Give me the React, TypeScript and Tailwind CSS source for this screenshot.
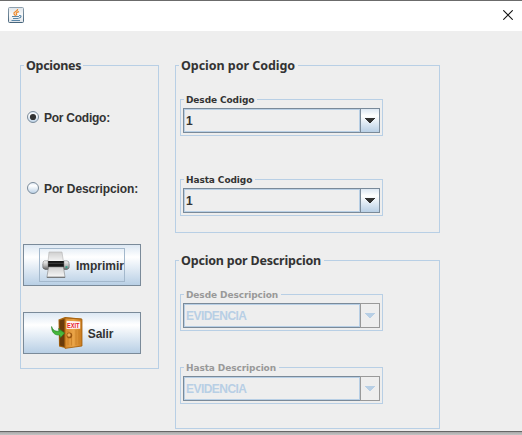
import type { ReactNode } from "react";

function JavaIcon() {
  return (
    <svg width="16" height="16" viewBox="0 0 16 16">
      <defs>
        <linearGradient id="java" x1="0" y1="0" x2="0" y2="1">
          <stop offset="0" stopColor="#dfe5ea" />
          <stop offset="0.5" stopColor="#fafafa" />
          <stop offset="1" stopColor="#dfe3e8" />
        </linearGradient>
        <linearGradient id="javaEdge" x1="0" y1="0" x2="0" y2="1">
          <stop offset="0" stopColor="#8ea0ae" />
          <stop offset="1" stopColor="#46657c" />
        </linearGradient>
      </defs>
      <rect x="0.5" y="0.5" width="15" height="15" rx="1" fill="url(#java)" stroke="url(#javaEdge)" />
      <path d="M9.6 2 C10.2 4.4 5 4.6 6 6.8 L7.6 8.8 M11 4.6 C8 5.4 7.6 6.3 9 8.3" fill="none" stroke="#ee8a2c" strokeWidth="1.3" />
      <path d="M4 9.5 H11 M5 11.5 H10.5 M11 8.5 C14 8 13.5 10.8 10.8 11 M3.5 13.5 H12" fill="none" stroke="#5a87a8" strokeWidth="1.1" />
    </svg>
  );
}

function PrinterIcon() {
  return (
    <svg width="28" height="28" viewBox="0 0 28 28">
      <defs>
        <linearGradient id="body" x1="0" y1="0" x2="0" y2="1">
          <stop offset="0" stopColor="#f5f5f5" />
          <stop offset="0.55" stopColor="#bcbcbc" />
          <stop offset="1" stopColor="#6c6c6c" />
        </linearGradient>
        <linearGradient id="paper" x1="0" y1="0" x2="0" y2="1">
          <stop offset="0" stopColor="#cfcfcf" />
          <stop offset="1" stopColor="#f7f7f7" />
        </linearGradient>
      </defs>
      <path d="M7 1 H20 L21.5 11 H6 Z" fill="url(#paper)" stroke="#b4b4b4" strokeWidth="0.6" />
      <path d="M2 10 H26 L27.2 13 V17 L25 18.5 H3 L0.8 17 V13 Z" fill="#141414" />
      <path d="M1 11 L2.3 9.8 H6 V18 H2.5 L1 16.8 Z" fill="url(#body)" stroke="#777" strokeWidth="0.5" />
      <path d="M22 9.8 H25.5 L27 11.5 V16.8 L25.6 18.2 H22 Z" fill="url(#body)" stroke="#777" strokeWidth="0.5" />
      <path d="M6 12.3 H22" stroke="#555" strokeWidth="0.7" />
      <path d="M6.5 16 H21.5 L23 26 H5 Z" fill="url(#paper)" stroke="#858585" strokeWidth="0.6" />
      <path d="M4.8 26.4 H23.2" stroke="#666" strokeWidth="0.9" />
      <rect x="23.6" y="15.2" width="1.8" height="2" fill="#2fa58d" />
    </svg>
  );
}

function ExitIcon() {
  return (
    <svg width="32" height="32" viewBox="0 0 32 32">
      <defs>
        <linearGradient id="door" x1="0" y1="0" x2="1" y2="0">
          <stop offset="0" stopColor="#d88a2c" />
          <stop offset="0.5" stopColor="#e9a448" />
          <stop offset="1" stopColor="#c97a1d" />
        </linearGradient>
        <linearGradient id="arrow" x1="0" y1="0" x2="0" y2="1">
          <stop offset="0" stopColor="#2f9a2c" />
          <stop offset="1" stopColor="#56ca45" />
        </linearGradient>
      </defs>
      <path d="M7.5 2.5 L14 0 L30.5 1.4 V29 L14 31 L8 29.5 Z" fill="#a8650f" />
      <path d="M8.5 3.5 L13.5 2 V30 L8.8 28.6 Z" fill="#6a3b0b" />
      <path d="M14 0.9 L31 2.2 V29 L14 31.4 Z" fill="url(#door)" stroke="#a3600f" strokeWidth="0.8" />
      <path d="M17 14 V28 M20.5 20 V28.5 M25 13 V28 M28 13 V27" stroke="#c67b24" strokeWidth="0.7" />
      <path d="M15.5 3.8 L29.2 4.4 V11.8 L15.5 12 Z" fill="#fff4f1" />
      <text x="16" y="10.9" fontFamily="Liberation Sans" fontWeight="700" fontSize="7" fill="#e8182a" textLength="12.5" lengthAdjust="spacingAndGlyphs">EXIT</text>
      <circle cx="18.4" cy="18.4" r="2.8" fill="#9c5710" />
      <circle cx="18" cy="18" r="1.7" fill="#efb35e" />
      <path d="M0.6 9.5 C1.8 13.4 4.5 14.5 8.2 14.2 L7.5 11.5 L13.6 16 L9.5 20.5 L8.8 18 C3.4 18.6 0.4 15 0.6 9.5 Z" fill="url(#arrow)" stroke="#26842a" strokeWidth="0.6" />
    </svg>
  );
}

function Group({ title, titleClass, className, children }: { title: string; titleClass: string; className: string; children: ReactNode }) {
  return (
    <section className={"relative border border-[#b8cfe5] " + className}>
      <h2 className={"absolute left-[3px] whitespace-nowrap bg-[#eeeeee] pl-[2px] font-bold " + titleClass}>
        {title}
      </h2>
      {children}
    </section>
  );
}

const panelTitle = "-top-[9px] h-[18px] font-['Noto_Sans',sans-serif] text-[12.5px] leading-[18px] ";

function Combo({ title, titleClass, value, disabled = false }: { title: string; titleClass: string; value: string; disabled?: boolean }) {
  return (
    <Group
      title={title}
      titleClass={"-top-[7px] h-[14px] font-['DejaVu_Sans',sans-serif] text-[9px] leading-[14px] tracking-[-0.1px] " + (disabled ? "text-[#999999] " : "text-[#333333] ") + titleClass}
      className="h-[37px] w-[203px] pl-[2px] pt-[8px]"
    >
      <div className="flex h-[25px] w-[197px]">
        <div className="h-full w-[177px] border border-r-0 border-[#7a8a99]">
          <div className={"h-full border border-[#b8cfe5] pl-px text-[12px] font-bold leading-[22px] " + (disabled ? "tracking-[-0.55px] text-[#b8cfe5]" : "text-[#333333]")}>
            {value}
          </div>
        </div>
        <div className={"flex h-full w-[20px] justify-center border pt-[9px] " + (disabled ? "border-[#999999]" : "border-[#7a8a99] bg-linear-to-b from-[#dde8f3] via-white via-30% to-[#b8cfe5]")}>
          <svg width="10" height="5" viewBox="0 0 10 5" shapeRendering="crispEdges">
            <path d="M0 0 H10 V1 H9 V2 H8 V3 H7 V4 H6 V5 H4 V4 H3 V3 H2 V2 H1 V1 H0 Z" fill={disabled ? "#b8cfe5" : "#333333"} />
          </svg>
        </div>
      </div>
    </Group>
  );
}

function Radio({ label, checked = false, spacing }: { label: string; checked?: boolean; spacing: string }) {
  return (
    <div className="ml-[6px] flex h-[12px] items-center gap-[5px]">
      <svg width="12" height="12" viewBox="0 0 12 12">
        <defs>
          <linearGradient id="radio" x1="0" y1="0" x2="0" y2="1">
            <stop offset="0" stopColor="#dde8f3" />
            <stop offset="0.3" stopColor="#ffffff" />
            <stop offset="1" stopColor="#b8cfe5" />
          </linearGradient>
        </defs>
        <circle cx="6" cy="6" r="5.5" fill="url(#radio)" stroke="#7a8a99" />
        {checked && <circle cx="6" cy="6" r="3.1" fill="#333333" />}
      </svg>
      <span className={"whitespace-nowrap pt-[2px] text-[12px] font-bold leading-[14px] " + spacing}>{label}</span>
    </div>
  );
}

const buttonClass =
  "ml-[2px] flex h-[42px] w-[118px] items-center justify-center border border-[#7a8a99] bg-linear-to-b from-[#dde8f3] via-white via-30% to-[#b8cfe5] text-[12px] font-bold";

export default function App() {
  return (
    <div className="flex h-[435px] w-[522px] flex-col overflow-hidden bg-[#eeeeee] font-['Liberation_Sans',Arial,sans-serif] text-[#333333]">
      <header className="flex h-[31px] shrink-0 justify-between border-t border-[#6b6b6b] bg-white pl-[8px] pr-[9px]">
        <div className="pt-[6px]">
          <JavaIcon />
        </div>
        <svg width="10" height="10" viewBox="0 0 10 10" className="mt-[9px]">
          <path d="M0.3 0.3 L9.7 9.7 M9.7 0.3 L0.3 9.7" stroke="#111" strokeWidth="1.1" />
        </svg>
      </header>
      <main className="flex h-[400px] shrink-0 gap-[16px] pl-[20px] pt-[34px]">
        <Group title="Opciones" titleClass={panelTitle + "w-[59px] tracking-[-0.3px]"} className="flex h-[304px] w-[139px] flex-col pt-[45px]">
          <Radio label="Por Codigo:" checked spacing="tracking-[-0.25px]" />
          <div className="h-[59px]" />
          <Radio label="Por Descripcion:" spacing="tracking-[-0.12px]" />
          <button className={buttonClass + " mt-[50px]"}>
            <span className="flex h-[34px] w-[86px] items-center gap-[6px] border border-[#a3b8cc] pl-[2px]">
              <PrinterIcon />
              <span className="pt-[2px]">Imprimir</span>
            </span>
          </button>
          <button className={buttonClass + " mt-[26px] gap-[5px]"}>
            <ExitIcon />
            <span className="pt-[2px] tracking-[-0.1px]">Salir</span>
          </button>
        </Group>
        <div className="flex flex-col gap-[27px]">
          <Group title="Opcion por Codigo" titleClass={panelTitle + "w-[119px] tracking-[-0.05px]"} className="flex h-[168px] w-[265px] flex-col gap-[43px] pl-[4px] pt-[33px]">
            <Combo title="Desde Codigo" titleClass="w-[73px]" value="1" />
            <Combo title="Hasta Codigo" titleClass="w-[71px]" value="1" />
          </Group>
          <Group title="Opcion por Descripcion" titleClass={panelTitle + "w-[145px] tracking-[-0.2px]"} className="flex h-[169px] w-[265px] flex-col gap-[36px] pl-[4px] pt-[33px]">
            <Combo title="Desde Descripcion" titleClass="w-[97px]" value="EVIDENCIA" disabled />
            <Combo title="Hasta Descripcion" titleClass="w-[95px]" value="EVIDENCIA" disabled />
          </Group>
        </div>
      </main>
      <footer className="h-[4px] shrink-0 border-t border-[#666666] bg-linear-to-b from-[#a8a8a8] to-[#c4c4c4]" />
    </div>
  );
}
